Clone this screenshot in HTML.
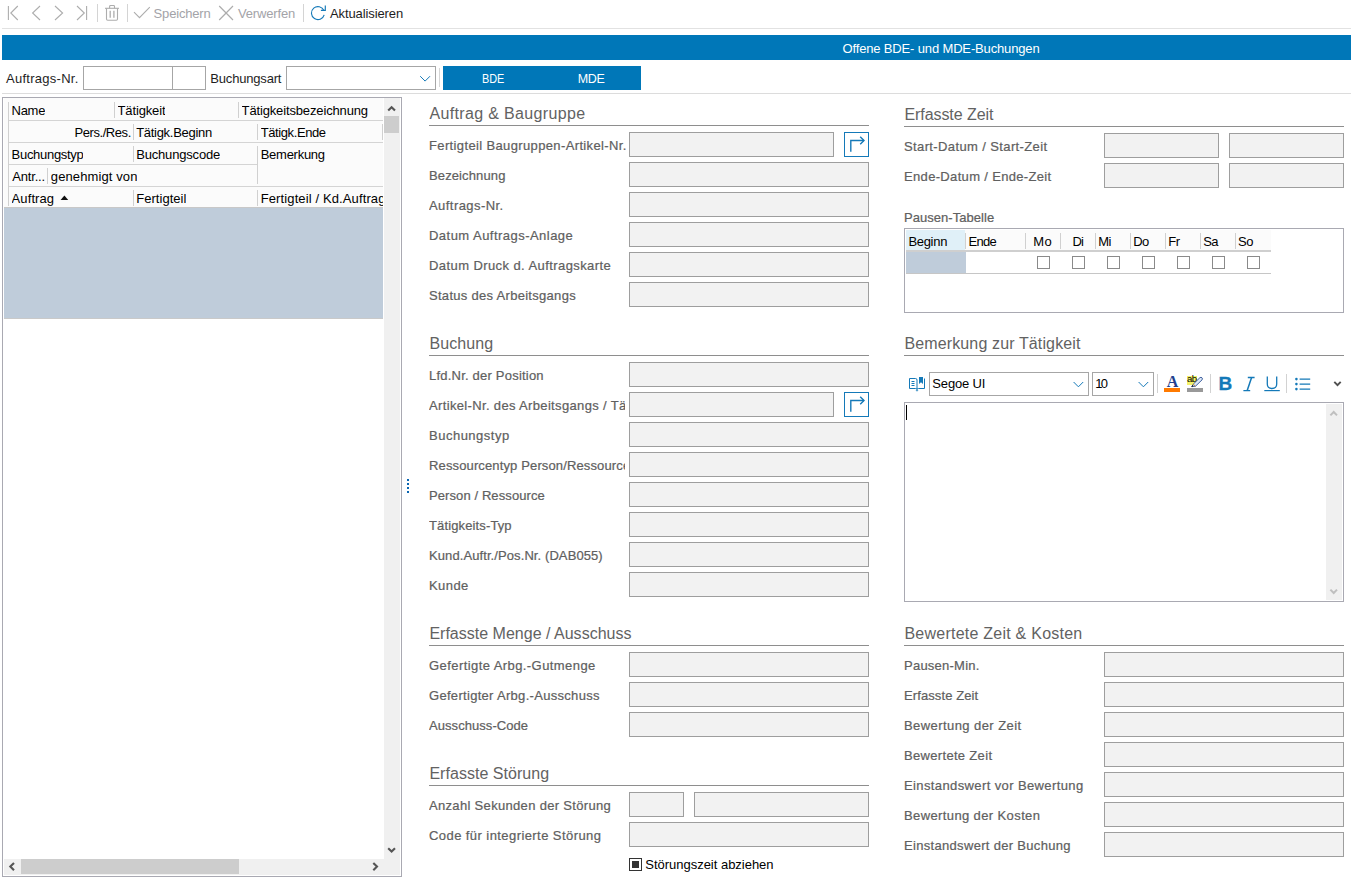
<!DOCTYPE html><html lang="de"><head><meta charset="utf-8"><title>Offene BDE- und MDE-Buchungen</title><style>
*{box-sizing:border-box;margin:0;padding:0}
html,body{width:1351px;height:878px;overflow:hidden;background:#fff}
body{font-family:"Liberation Sans",sans-serif;font-size:13px;color:#1e1e1e;position:relative}
.a{position:absolute;white-space:nowrap}
.lbl{position:absolute;white-space:nowrap;color:#606060;font-size:13px;height:18px;line-height:18px;overflow:hidden;width:196px;-webkit-text-stroke:.22px #606060}
.inp{position:absolute;height:25px;background:#f2f2f2;border:1px solid #9e9e9e}
.hd{position:absolute;white-space:nowrap;color:#626262;font-size:16px;line-height:18px}
.hl{position:absolute;height:1px;background:#8e8e8e}
.btn{position:absolute;width:25px;height:25px;border:1px solid #1479b8;background:#fff}
.gt{position:absolute;height:22px;line-height:22px;font-size:13px;color:#000;white-space:nowrap;overflow:hidden}
.gl{position:absolute;height:1px;background:#d4d4d4}
.gv{position:absolute;width:1px;height:16px;background:#d0d0d0}
.tb{position:absolute;white-space:nowrap;font-size:13px;line-height:18px}
.sep{position:absolute;width:1px;background:#d2d2d2}
.cb{position:absolute;width:13px;height:13px;border:1px solid #8a8a8a;background:#fff}
.ph{position:absolute;top:231px;height:20px;line-height:22px;font-size:13px;color:#000;white-space:nowrap}
</style></head><body>
<svg class="a" style="left:0;top:0" width="420" height="28" viewBox="0 0 420 28" fill="none" stroke-linecap="butt">
<g stroke="#adadad" stroke-width="1.1">
<path d="M8.4 6V20"/><path d="M17.8 6L10.8 13L17.8 20"/>
<path d="M40 6L32.6 13L40 20"/>
<path d="M55 6L62.6 13L55 20"/>
<path d="M77 6L84.3 13L77 20"/><path d="M86.6 6V20"/>
</g>
<g stroke="#d4d4d4" stroke-width="1"><path d="M97.5 4V22"/><path d="M127.5 4V22"/><path d="M303.5 4V22"/></g>
<g stroke="#adadad" stroke-width="1.1"><path d="M105 8.3H119"/><path d="M109.6 8.3V6.4Q109.6 5.5 110.5 5.5H113.6Q114.5 5.5 114.5 6.4V8.3"/><path d="M106.5 8.3V19Q106.5 20.2 107.7 20.2H116.3Q117.5 20.2 117.5 19V8.3"/><path d="M110.2 10.8V17.8M113.9 10.8V17.8" stroke-width="1.3"/></g>
<path d="M134 12.2L139.5 17.7L149.8 7.2" stroke="#adadad" stroke-width="1.1"/>
<path d="M219.2 6L233 20M233 6L219.2 20" stroke="#adadad" stroke-width="1.2"/>
<path d="M323.9 10.5A6.5 6.5 0 1 0 324.2 14.9" stroke="#1479b8" stroke-width="1.15"/><path d="M325.3 5.6V10.3H320.9" stroke="#1479b8" stroke-width="1.15" stroke-linejoin="miter"/>
</svg>
<div class="tb" style="left:153.6px;top:5px;color:#a3a3a8;letter-spacing:-0.183px">Speichern</div>
<div class="tb" style="left:238px;top:5px;color:#a3a3a8;letter-spacing:-0.156px">Verwerfen</div>
<div class="tb" style="left:330px;top:5px;color:#1e1e1e;letter-spacing:-0.104px">Aktualisieren</div>
<div class="a" style="left:2px;top:28px;width:1349px;height:1px;background:#e2e2e2"></div>
<div class="a" style="left:2px;top:35px;width:1349px;height:25px;background:#0077b8"></div>
<div class="a" style="left:842.5px;top:41px;color:#fff;font-size:13px;line-height:16px;letter-spacing:-0.151px">Offene BDE- und MDE-Buchungen</div>
<div class="a" style="left:6px;top:70px;line-height:18px;letter-spacing:0.267px">Auftrags-Nr.</div>
<div class="a" style="left:83px;top:66px;width:90px;height:24px;border:1px solid #a6a6a6;background:#fff"></div>
<div class="a" style="left:172px;top:66px;width:34px;height:24px;border:1px solid #a6a6a6;background:#fff"></div>
<div class="a" style="left:210.3px;top:70px;line-height:18px;letter-spacing:-0.182px">Buchungsart</div>
<div class="a" style="left:286px;top:66px;width:150px;height:24px;border:1px solid #a6a6a6;background:#fff"></div>
<svg class="a" style="left:417px;top:72px" width="16" height="12" viewBox="0 0 16 12" fill="none"><path d="M3.2 4.2L8.1 9.1L13 4.2" stroke="#1479b8" stroke-width="1"/></svg>
<div class="a" style="left:439px;top:68px;width:1px;height:19px;background:#d6d6d6"></div>
<div class="a" style="left:443px;top:66px;width:198px;height:24px;background:#0077b8"></div>
<div class="a" style="left:481.5px;top:67px;height:24px;line-height:25px;color:#fff;font-size:12.5px;transform-origin:0 0;transform:scaleX(0.871)">BDE</div>
<div class="a" style="left:577.8px;top:67px;height:24px;line-height:25px;color:#fff;font-size:12.5px;letter-spacing:-0.391px">MDE</div>
<div class="a" style="left:2px;top:93px;width:1349px;height:1px;background:#dcdcdc"></div>
<div class="a" style="left:2px;top:97px;width:400px;height:780px;border:1px solid #a9a9b2;background:#fff"></div>
<div class="a" style="left:4px;top:98px;width:379px;height:109px;background:#fbfbfb"></div>
<div class="gl" style="left:8px;top:120px;width:375px"></div>
<div class="gl" style="left:8px;top:142px;width:375px"></div>
<div class="gl" style="left:8px;top:164px;width:250px"></div>
<div class="gl" style="left:8px;top:186px;width:375px"></div>
<div class="gv" style="left:8px;top:102px;height:104px"></div>
<div class="gv" style="left:114px;top:102px;height:16px"></div>
<div class="gv" style="left:238px;top:102px;height:16px"></div>
<div class="gv" style="left:133px;top:124px;height:16px"></div>
<div class="gv" style="left:257px;top:124px;height:16px"></div>
<div class="gv" style="left:382px;top:124px;height:16px"></div>
<div class="gv" style="left:133px;top:146px;height:16px"></div>
<div class="gv" style="left:257px;top:146px;height:38px"></div>
<div class="gv" style="left:47px;top:168px;height:16px"></div>
<div class="gv" style="left:133px;top:190px;height:16px"></div>
<div class="gv" style="left:257px;top:190px;height:16px"></div>
<div class="gt" style="left:11.6px;top:99.5px;letter-spacing:-0.296px;">Name</div>
<div class="gt" style="left:117.5px;top:99.5px;letter-spacing:-0.13px;">Tätigkeit</div>
<div class="gt" style="left:241.6px;top:99.5px;letter-spacing:-0.145px;">Tätigkeitsbezeichnung</div>
<div class="gt" style="left:74.5px;top:121.5px;letter-spacing:-0.432px;">Pers./Res.</div>
<div class="gt" style="left:136.2px;top:121.5px;letter-spacing:-0.293px;">Tätigk.Beginn</div>
<div class="gt" style="left:260.7px;top:121.5px;letter-spacing:-0.399px;">Tätigk.Ende</div>
<div class="gt" style="left:11.6px;top:143.5px;letter-spacing:-0.299px;">Buchungstyp</div>
<div class="gt" style="left:136.2px;top:143.5px;letter-spacing:-0.177px;">Buchungscode</div>
<div class="gt" style="left:260.7px;top:143.5px;letter-spacing:-0.262px;">Bemerkung</div>
<div class="gt" style="left:12.3px;top:165.5px;letter-spacing:-0.192px;">Antr...</div>
<div class="gt" style="left:50.8px;top:165.5px;letter-spacing:0.107px;">genehmigt von</div>
<div class="gt" style="left:11.6px;top:187.5px;letter-spacing:0.096px;">Auftrag</div>
<div class="gt" style="left:136.2px;top:187.5px;letter-spacing:0.038px;">Fertigteil</div>
<div class="gt" style="left:260.7px;top:187.5px;width:122.3px;letter-spacing:0.12px">Fertigteil / Kd.Auftrag</div>
<svg class="a" style="left:60px;top:195px" width="9" height="6" viewBox="0 0 9 6"><path d="M0.6 5L4.4 0.6L8.2 5Z" fill="#111"/></svg>
<div class="a" style="left:4px;top:207px;width:379px;height:111px;background:#bfccda"></div>
<div class="a" style="left:4px;top:318px;width:379px;height:1px;background:#c9c9c9"></div>
<div class="a" style="left:4px;top:207px;width:379px;height:1px;background:#c8c8c8"></div>
<div class="a" style="left:384px;top:98px;width:16px;height:777px;background:#f0f0f0"></div>
<div class="a" style="left:4px;top:859px;width:396px;height:16px;background:#f0f0f0"></div>
<div class="a" style="left:384px;top:116px;width:15px;height:17px;background:#cdcdcd"></div>
<div class="a" style="left:21px;top:859px;width:218px;height:15px;background:#cdcdcd"></div>
<svg class="a" style="left:0;top:0" width="402" height="878" viewBox="0 0 402 878" fill="none" stroke="#555" stroke-width="2.1"><path d="M388.2 110.6L391.6 107.2L395 110.6"/><path d="M388.2 848.2L391.6 851.6L395 848.2"/><path d="M14 862.9L10.3 866.6L14 870.3"/><path d="M373.3 862.9L377 866.6L373.3 870.3"/></svg>
<div class="a" style="left:407px;top:479px;width:2px;height:2px;background:#0a66b2;box-shadow:0 4px #0a66b2,0 8px #0a66b2,0 12px #0a66b2"></div>
<div class="hd" style="left:429.4px;top:105px;letter-spacing:0.347px">Auftrag &amp; Baugruppe</div>
<div class="hl" style="left:429px;top:125px;width:440px"></div>
<div class="lbl" style="left:429px;top:137px;width:199px;letter-spacing:0.365px">Fertigteil Baugruppen-Artikel-Nr.</div>
<div class="inp" style="left:629px;top:132px;width:205px"></div>
<div class="btn" style="left:844px;top:132px"><svg width="23" height="23" viewBox="0 0 23 23" fill="none" stroke="#1479b8" stroke-width="1.4"><path d="M5.8 18.8V7.5H19"/><path d="M15.2 3.8L19 7.5L15.2 11.2"/></svg></div>
<div class="lbl" style="left:429px;top:167px;letter-spacing:0.12px">Bezeichnung</div>
<div class="inp" style="left:629px;top:162px;width:240px"></div>
<div class="lbl" style="left:429px;top:197px;letter-spacing:0.44px">Auftrags-Nr.</div>
<div class="inp" style="left:629px;top:192px;width:240px"></div>
<div class="lbl" style="left:429px;top:227px;letter-spacing:0.468px">Datum Auftrags-Anlage</div>
<div class="inp" style="left:629px;top:222px;width:240px"></div>
<div class="lbl" style="left:429px;top:257px;letter-spacing:0.417px">Datum Druck d. Auftragskarte</div>
<div class="inp" style="left:629px;top:252px;width:240px"></div>
<div class="lbl" style="left:429px;top:287px;letter-spacing:0.294px">Status des Arbeitsgangs</div>
<div class="inp" style="left:629px;top:282px;width:240px"></div>
<div class="hd" style="left:429.4px;top:335px;letter-spacing:0.099px">Buchung</div>
<div class="hl" style="left:429px;top:355px;width:440px"></div>
<div class="lbl" style="left:429px;top:367px;letter-spacing:0.212px">Lfd.Nr. der Position</div>
<div class="inp" style="left:629px;top:362px;width:240px"></div>
<div class="lbl" style="left:429px;top:397px;letter-spacing:0.345px">Artikel-Nr. des Arbeitsgangs / Tätigkeit</div>
<div class="inp" style="left:629px;top:392px;width:205px"></div>
<div class="btn" style="left:844px;top:392px"><svg width="23" height="23" viewBox="0 0 23 23" fill="none" stroke="#1479b8" stroke-width="1.4"><path d="M5.8 18.8V7.5H19"/><path d="M15.2 3.8L19 7.5L15.2 11.2"/></svg></div>
<div class="lbl" style="left:429px;top:427px;letter-spacing:0.501px">Buchungstyp</div>
<div class="inp" style="left:629px;top:422px;width:240px"></div>
<div class="lbl" style="left:429px;top:457px;letter-spacing:0.135px">Ressourcentyp Person/Ressource</div>
<div class="inp" style="left:629px;top:452px;width:240px"></div>
<div class="lbl" style="left:429px;top:487px;letter-spacing:0.095px">Person / Ressource</div>
<div class="inp" style="left:629px;top:482px;width:240px"></div>
<div class="lbl" style="left:429px;top:517px;letter-spacing:0.129px">Tätigkeits-Typ</div>
<div class="inp" style="left:629px;top:512px;width:240px"></div>
<div class="lbl" style="left:429px;top:547px;letter-spacing:0.09px">Kund.Auftr./Pos.Nr. (DAB055)</div>
<div class="inp" style="left:629px;top:542px;width:240px"></div>
<div class="lbl" style="left:429px;top:577px;letter-spacing:0.423px">Kunde</div>
<div class="inp" style="left:629px;top:572px;width:240px"></div>
<div class="hd" style="left:429.4px;top:625px;letter-spacing:0.008px">Erfasste Menge / Ausschuss</div>
<div class="hl" style="left:429px;top:645px;width:440px"></div>
<div class="lbl" style="left:429px;top:657px;letter-spacing:0.425px">Gefertigte Arbg.-Gutmenge</div>
<div class="inp" style="left:629px;top:652px;width:240px"></div>
<div class="lbl" style="left:429px;top:687px;letter-spacing:0.304px">Gefertigter Arbg.-Ausschuss</div>
<div class="inp" style="left:629px;top:682px;width:240px"></div>
<div class="lbl" style="left:429px;top:717px;letter-spacing:0.062px">Ausschuss-Code</div>
<div class="inp" style="left:629px;top:712px;width:240px"></div>
<div class="hd" style="left:429.4px;top:765px;letter-spacing:0.037px">Erfasste Störung</div>
<div class="hl" style="left:429px;top:785px;width:440px"></div>
<div class="lbl" style="left:429px;top:797px;letter-spacing:0.319px">Anzahl Sekunden der Störung</div>
<div class="inp" style="left:629px;top:792px;width:55px"></div>
<div class="inp" style="left:694px;top:792px;width:175px"></div>
<div class="lbl" style="left:429px;top:827px;letter-spacing:0.427px">Code für integrierte Störung</div>
<div class="inp" style="left:629px;top:822px;width:240px"></div>
<div class="a" style="left:629px;top:858px;width:13px;height:13px;border:1px solid #333;background:#fff"></div><div class="a" style="left:632px;top:861px;width:7px;height:7px;background:#333"></div>
<div class="a" style="left:645.3px;top:856px;line-height:18px;color:#000;letter-spacing:-0.019px">Störungszeit abziehen</div>
<div class="hd" style="left:904.4px;top:106px;letter-spacing:-0.065px">Erfasste Zeit</div>
<div class="hl" style="left:904px;top:126px;width:440px"></div>
<div class="lbl" style="left:904px;top:138px;letter-spacing:0.38px">Start-Datum / Start-Zeit</div>
<div class="inp" style="left:1104px;top:133px;width:115px"></div>
<div class="inp" style="left:1229px;top:133px;width:115px"></div>
<div class="lbl" style="left:904px;top:168px;letter-spacing:0.333px">Ende-Datum / Ende-Zeit</div>
<div class="inp" style="left:1104px;top:163px;width:115px"></div>
<div class="inp" style="left:1229px;top:163px;width:115px"></div>
<div class="lbl" style="left:904px;top:209px;letter-spacing:0.042px">Pausen-Tabelle</div>
<div class="a" style="left:904px;top:228px;width:440px;height:85px;border:1px solid #a9a9b2;background:#fff"></div>
<div class="a" style="left:906px;top:230px;width:365px;height:20px;background:#fbfbfb"></div>
<div class="a" style="left:906px;top:230px;width:59px;height:20px;background:#e0f0f8"></div>
<div class="gv" style="left:965px;top:233px;height:16px"></div>
<div class="gv" style="left:1025px;top:233px;height:16px"></div>
<div class="gv" style="left:1060px;top:233px;height:16px"></div>
<div class="gv" style="left:1095px;top:233px;height:16px"></div>
<div class="gv" style="left:1130px;top:233px;height:16px"></div>
<div class="gv" style="left:1165px;top:233px;height:16px"></div>
<div class="gv" style="left:1200px;top:233px;height:16px"></div>
<div class="gv" style="left:1235px;top:233px;height:16px"></div>
<div class="ph" style="left:908.4px;letter-spacing:-0.3px">Beginn</div>
<div class="ph" style="left:968.4px;letter-spacing:-0.658px">Ende</div>
<div class="ph" style="left:1033.2px;letter-spacing:0.438px">Mo</div>
<div class="ph" style="left:1072.5px;letter-spacing:-0.881px">Di</div>
<div class="ph" style="left:1098.2px;letter-spacing:-.5px">Mi</div>
<div class="ph" style="left:1133.2px;letter-spacing:-.5px">Do</div>
<div class="ph" style="left:1168.2px;letter-spacing:-.5px">Fr</div>
<div class="ph" style="left:1203.2px;letter-spacing:-.5px">Sa</div>
<div class="ph" style="left:1238px;letter-spacing:-.5px">So</div>
<div class="a" style="left:906px;top:250px;width:365px;height:2px;background:#cfcfcf"></div>
<div class="a" style="left:906px;top:252px;width:60px;height:21px;background:#bfccda"></div>
<div class="a" style="left:906px;top:273px;width:365px;height:1px;background:#c6c6c6"></div>
<div class="cb" style="left:1037px;top:256px"></div>
<div class="cb" style="left:1072px;top:256px"></div>
<div class="cb" style="left:1107px;top:256px"></div>
<div class="cb" style="left:1142px;top:256px"></div>
<div class="cb" style="left:1177px;top:256px"></div>
<div class="cb" style="left:1212px;top:256px"></div>
<div class="cb" style="left:1247px;top:256px"></div>
<div class="hd" style="left:904.4px;top:335px;letter-spacing:0.134px">Bemerkung zur Tätigkeit</div>
<div class="hl" style="left:904px;top:355px;width:440px"></div>
<svg class="a" style="left:908px;top:376px" width="18" height="16" viewBox="0 0 18 16" fill="none"><path d="M1.5 2.5H7.5Q9 2.5 9 4V13.5Q9 12.5 7.5 12.5H1.5Z" stroke="#1479b8" stroke-width="1"/><path d="M16.5 2.5V12.5H10.5Q9 12.5 9 13.5" stroke="#1479b8" stroke-width="1"/><path d="M3.5 5.5H6.5M3.5 7.5H6.5M3.5 9.5H6.5" stroke="#1479b8" stroke-width="1"/><path d="M11 1H15V8L13 6.3L11 8Z" fill="#1479b8"/><path d="M7.5 14.2H10.5L9 15.6Z" fill="#1479b8"/></svg>
<div class="a" style="left:929px;top:372px;width:160px;height:24px;border:1px solid #a6a6a6;background:#fff"></div>
<div class="a" style="left:932.3px;top:373px;line-height:22px;color:#000;letter-spacing:-0.16px">Segoe UI</div>
<svg class="a" style="left:1070px;top:378px" width="16" height="12" viewBox="0 0 16 12" fill="none"><path d="M3.6 4L8.4 8.8L13.2 4" stroke="#1479b8" stroke-width="1"/></svg>
<div class="a" style="left:1092px;top:372px;width:62px;height:24px;border:1px solid #a6a6a6;background:#fff"></div>
<div class="a" style="left:1095.3px;top:373px;line-height:22px;color:#000;letter-spacing:-1.769px">10</div>
<svg class="a" style="left:1135px;top:378px" width="16" height="12" viewBox="0 0 16 12" fill="none"><path d="M3.6 4L8.4 8.8L13.2 4" stroke="#1479b8" stroke-width="1"/></svg>
<div class="sep" style="left:1157px;top:374px;height:19px"></div>
<div class="a" style="left:1166.8px;top:373px;font-family:'Liberation Serif',serif;font-weight:bold;font-size:16px;line-height:18px;color:#223f8e">A</div>
<div class="a" style="left:1164px;top:388px;width:16px;height:4px;background:#ff7a00"></div>
<div class="a" style="left:1187px;top:376px;width:10px;height:9px;background:#f4f268"></div>
<div class="a" style="left:1187px;top:373px;font-size:9.5px;line-height:12px;color:#000;letter-spacing:-.6px">ab</div>
<svg class="a" style="left:1190px;top:375px" width="14" height="13" viewBox="0 0 14 13" fill="none"><path d="M3.2 9.2L9.8 2.8Q11 1.8 12 2.8Q13 3.9 12 4.9L5.5 11.2L2 11.6Z" fill="#dbe8f8" stroke="#2d4f92" stroke-width=".9"/><path d="M3.2 9.2L5.5 11.2" stroke="#c98a3a" stroke-width="1"/><path d="M1.6 11.8L3 10.4" stroke="#222" stroke-width="1.1"/></svg>
<div class="a" style="left:1187px;top:388px;width:16px;height:4px;background:#999"></div>
<div class="sep" style="left:1210px;top:374px;height:19px"></div>
<div class="a" style="left:1218.6px;top:373px;font-weight:bold;font-size:19px;line-height:22px;color:#1479b8;-webkit-text-stroke:.3px #1479b8">B</div>
<svg class="a" style="left:1242px;top:376px" width="14" height="16" viewBox="0 0 14 16" fill="none" stroke="#1479b8" stroke-width="1.5"><path d="M9.6 1.4L5.2 14.6"/><path d="M5.8 1.5H12.6M1.4 14.6H8.2" stroke-width="1.3"/></svg>
<svg class="a" style="left:1264px;top:376px" width="16" height="16" viewBox="0 0 16 16" fill="none" stroke="#1479b8"><path d="M3.3 0.6V8Q3.3 12.5 8 12.5Q12.7 12.5 12.7 8V0.6" stroke-width="1.3"/><path d="M0.3 14.6H15.8" stroke-width="1.2"/></svg>
<div class="sep" style="left:1286px;top:374px;height:19px"></div>
<svg class="a" style="left:1294px;top:377px" width="18" height="14" viewBox="0 0 18 14" fill="none" stroke="#1479b8" stroke-width="1.4"><path d="M5.6 2.1H16.2M5.6 7.1H16.2M5.6 12.1H16.2"/><g fill="#1479b8" stroke="none"><circle cx="2.4" cy="2.1" r="1.3"/><circle cx="2.4" cy="7.1" r="1.3"/><circle cx="2.4" cy="12.1" r="1.3"/></g></svg>
<svg class="a" style="left:1332px;top:379px" width="11" height="10" viewBox="0 0 11 10" fill="none"><path d="M2.3 2.8L5.5 6.2L8.7 2.8" stroke="#505050" stroke-width="1.9"/></svg>
<div class="a" style="left:904px;top:402px;width:440px;height:200px;border:1px solid #a9a9b2;background:#fff"></div>
<div class="a" style="left:1326px;top:404px;width:16px;height:196px;background:#f0f0f0"></div>
<svg class="a" style="left:1326px;top:404px" width="16" height="196" viewBox="0 0 16 196" fill="none" stroke="#bfbfbf" stroke-width="2"><path d="M4.4 11.4L7.7 8L11 11.4"/><path d="M4.4 185.6L7.7 189L11 185.6"/></svg>
<div class="a" style="left:906px;top:405px;width:1px;height:15px;background:#000"></div>
<div class="hd" style="left:904.4px;top:625px;letter-spacing:0.242px">Bewertete Zeit &amp; Kosten</div>
<div class="hl" style="left:904px;top:645px;width:440px"></div>
<div class="lbl" style="left:904px;top:657px;letter-spacing:0.24px">Pausen-Min.</div>
<div class="inp" style="left:1104px;top:652px;width:240px"></div>
<div class="lbl" style="left:904px;top:687px;letter-spacing:0.103px">Erfasste Zeit</div>
<div class="inp" style="left:1104px;top:682px;width:240px"></div>
<div class="lbl" style="left:904px;top:717px;letter-spacing:0.426px">Bewertung der Zeit</div>
<div class="inp" style="left:1104px;top:712px;width:240px"></div>
<div class="lbl" style="left:904px;top:747px;letter-spacing:0.321px">Bewertete Zeit</div>
<div class="inp" style="left:1104px;top:742px;width:240px"></div>
<div class="lbl" style="left:904px;top:777px;letter-spacing:0.388px">Einstandswert vor Bewertung</div>
<div class="inp" style="left:1104px;top:772px;width:240px"></div>
<div class="lbl" style="left:904px;top:807px;letter-spacing:0.386px">Bewertung der Kosten</div>
<div class="inp" style="left:1104px;top:802px;width:240px"></div>
<div class="lbl" style="left:904px;top:837px;letter-spacing:0.315px">Einstandswert der Buchung</div>
<div class="inp" style="left:1104px;top:832px;width:240px"></div>
</body></html>
